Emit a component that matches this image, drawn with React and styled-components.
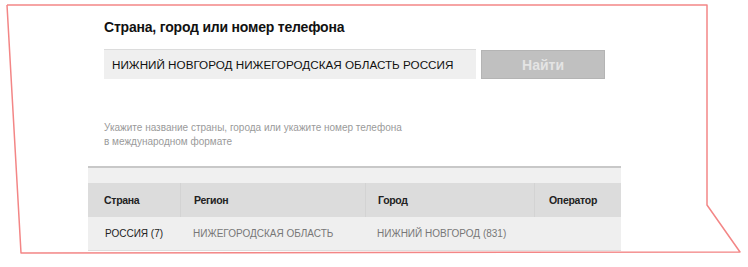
import styled, { createGlobalStyle } from "styled-components";

const GlobalStyle = createGlobalStyle`
  html, body {
    margin: 0;
    padding: 0;
    background: #fff;
  }
  body {
    font-family: "Liberation Sans", Arial, sans-serif;
  }
`;

const Page = styled.div`
  position: relative;
  width: 748px;
  height: 267px;
  overflow: hidden;
`;

// the torn-paper outline round the crop
const Frame = styled.svg`
  position: absolute;
  left: 0;
  top: 0;
  pointer-events: none;
`;

const Content = styled.div`
  padding: 19px 0 0 88px;
  display: flex;
  flex-direction: column;
`;

const Form = styled.div`
  padding-left: 16px;
  display: flex;
  flex-direction: column;
`;

const Title = styled.h3`
  margin: 0 0 14px;
  font-size: 14px;
  font-weight: bold;
  color: #111;
  letter-spacing: -0.2px;
  line-height: 16px;
`;

const SearchRow = styled.div`
  display: flex;
  gap: 5px;
  align-items: flex-start;
`;

const Input = styled.input`
  box-sizing: border-box;
  width: 372px;
  height: 30px;
  border: none;
  border-top: 1px solid #dcdcdc;
  background: #efefef;
  padding: 0 8px;
  font-family: "Liberation Sans", Arial, sans-serif;
  font-size: 11.7px;
  color: #111;
  outline: none;
`;

const Button = styled.button`
  box-sizing: border-box;
  margin-top: 1px;
  width: 124px;
  height: 29px;
  border: 1px solid #b4b4b4;
  background: #c0c0c0;
  color: #e4e4e4;
  font-family: "Liberation Sans", Arial, sans-serif;
  font-size: 14px;
  font-weight: bold;
`;

const Hint = styled.p`
  margin: 42px 0 0;
  font-size: 10px;
  line-height: 14px;
  color: #9a9a9a;
`;

const Table = styled.div`
  margin-top: 17px;
  width: 533px;
  border-top: 2px solid #c8c8c8;
  background: #f0f0f0;
  padding-top: 15px;
`;

const Row = styled.div`
  display: grid;
  grid-template-columns: 92px 185px 169px 87px;
  height: ${(p) => (p.$head ? 34 : 33)}px;
  background: ${(p) => (p.$head ? "#dcdcdc" : "#efefef")};
  border-bottom: ${(p) => (p.$head ? "none" : "1px solid #dddddd")};
`;

const Cell = styled.div`
  display: flex;
  align-items: center;
  padding-left: ${(p) => p.$pad || 13}px;
  font-size: ${(p) => (p.$head ? 10.5 : 10)}px;
  font-weight: ${(p) => (p.$head ? "bold" : "normal")};
  color: ${(p) => p.$color || "#222"};
  border-left: ${(p) => (p.$first || !p.$head ? "none" : "1px solid #d3d3d3")};
  letter-spacing: ${(p) => (p.$head ? "-0.3px" : "0")};
`;

export default function App() {
  return (
    <Page>
      <GlobalStyle />
      <Content>
        <Form>
          <Title>Страна, город или номер телефона</Title>
          <SearchRow>
            <Input defaultValue="НИЖНИЙ НОВГОРОД НИЖЕГОРОДСКАЯ ОБЛАСТЬ РОССИЯ" />
            <Button>Найти</Button>
          </SearchRow>
          <Hint>
            Укажите название страны, города или укажите номер телефона
            <br />в международном формате
          </Hint>
        </Form>
        <Table>
          <Row $head>
            <Cell $head $first $pad={16}>Страна</Cell>
            <Cell $head>Регион</Cell>
            <Cell $head $pad={12}>Город</Cell>
            <Cell $head $pad={14}>Оператор</Cell>
          </Row>
          <Row>
            <Cell $pad={17}>РОССИЯ (7)</Cell>
            <Cell $color="#777">НИЖЕГОРОДСКАЯ ОБЛАСТЬ</Cell>
            <Cell $pad={12} $color="#777">НИЖНИЙ НОВГОРОД (831)</Cell>
            <Cell />
          </Row>
        </Table>
      </Content>
      <Frame width="748" height="267" viewBox="0 0 748 267">
        <polyline
          points="7,5 707,5 707,205 740,252 21,253 7,5"
          fill="none"
          stroke="#f38686"
          strokeWidth="1.5"
          strokeLinejoin="round"
        />
      </Frame>
    </Page>
  );
}
